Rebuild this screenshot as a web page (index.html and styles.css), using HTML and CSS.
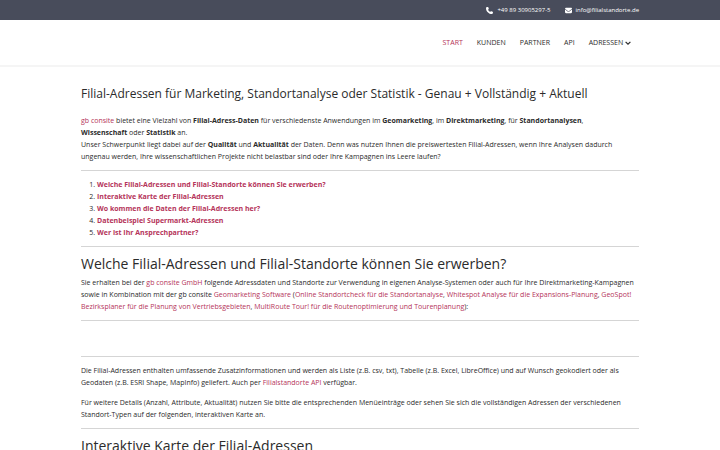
FILE: index.html
```html
<!DOCTYPE html>
<html lang="de">
  <head>
    <meta charset="UTF-8" />
    <meta name="viewport" content="width=device-width, initial-scale=1.0" />
    <title>Filial-Adressen</title>
    <link rel="stylesheet" href="styles.css">
  </head>
  <body>
    <!-- Contact bar -->
    <div class="top-bar">
      <div class="container contact">
        <a href="tel:+4989309052975">
          <svg class="icon" viewBox="0 0 512 512"><path fill="currentColor" d="M164.900 24.600c-7.700-18.600-28-28.500-47.400-23.200l-88 24C12.100 30.200 0 46 0 64c0 247.400 200.600 448 448 448 18 0 33.800-12.100 38.600-29.500l24-88c5.300-19.400-4.600-39.700-23.200-47.400l-96-40c-16.300-6.800-35.200-2.100-46.300 11.600L304.700 368C234.300 334.700 177.300 277.700 144 207.300L193.300 167c13.700-11.200 18.400-30 11.600-46.300l-40-96z"/></svg>
          +49 89 30905297-5
        </a>
        <a href="mailto:info@filialstandorte.de">
          <svg class="icon" viewBox="0 0 512 512"><path fill="currentColor" d="M48 64C21.500 64 0 85.500 0 112c0 15.100 7.100 29.300 19.200 38.400l217.600 163.200c11.400 8.500 27 8.500 38.400 0l217.600-163.200c12.100-9.100 19.200-23.300 19.200-38.400 0-26.500-21.500-48-48-48H48zM0 176v208c0 35.300 28.700 64 64 64h384c35.300 0 64-28.700 64-64V176L294.400 339.200c-22.800 17.100-54 17.100-76.800 0L0 176z"/></svg>
          info@filialstandorte.de
        </a>
      </div>
    </div>

    <!-- Main menu -->
    <header class="header">
      <nav class="container menu">
        <a class="active" href="#">Start</a>
        <a href="#">Kunden</a>
        <a href="#">Partner</a>
        <a href="#">API</a>
        <a href="#">Adressen <svg class="arrow" viewBox="0 0 10 10"><path d="M1 3l4 4 4-4" fill="none" stroke="currentColor" stroke-width="2"/></svg></a>
      </nav>
    </header>

    <main class="container content">
      <h1>Filial-Adressen für Marketing, Standortanalyse oder Statistik - Genau + Vollständig + Aktuell</h1>
      <p>
        <a href="#">gb consite</a> bietet eine Vielzahl von <strong>Filial-Adress-Daten</strong> für verschiedenste Anwendungen im <strong>Geomarketing</strong>, im <strong>Direktmarketing</strong>, für <strong>Standortanalysen</strong>,<br>
        <strong>Wissenschaft</strong> oder <strong>Statistik</strong> an.<br>
        Unser Schwerpunkt liegt dabei auf der <strong>Qualität</strong> und <strong>Aktualität</strong> der Daten. Denn was nutzen Ihnen die preiswertesten Filial-Adressen, wenn Ihre Analysen dadurch ungenau werden, Ihre wissenschaftlichen Projekte nicht belastbar sind oder Ihre Kampagnen ins Leere laufen?
      </p>
      <hr>
      <ol>
        <li><a href="#erwerben">Welche Filial-Adressen und Filial-Standorte können Sie erwerben?</a></li>
        <li><a href="#karte">Interaktive Karte der Filial-Adressen</a></li>
        <li><a href="#">Wo kommen die Daten der Filial-Adressen her?</a></li>
        <li><a href="#">Datenbeispiel Supermarkt-Adressen</a></li>
        <li><a href="#">Wer ist Ihr Ansprechpartner?</a></li>
      </ol>
      <hr>
      <h2 id="erwerben">Welche Filial-Adressen und Filial-Standorte können Sie erwerben?</h2>
      <p>
        Sie erhalten bei der <a href="#">gb consite GmbH</a> folgende Adressdaten und Standorte zur Verwendung in eigenen Analyse-Systemen oder auch für Ihre Direktmarketing-Kampagnen sowie in Kombination mit der gb consite <a href="#">Geomarketing Software</a> (<a href="#">Online Standortcheck für die Standortanalyse</a>, <a href="#">Whitespot Analyse für die Expansions-Planung</a>, <a href="#">GeoSpot! Bezirksplaner für die Planung von Vertriebsgebieten</a>, <a href="#">MultiRoute Tour! für die Routenoptimierung und Tourenplanung</a>):
      </p>
      <hr>
      <div class="teaser"></div>
      <hr>
      <p>Die Filial-Adressen enthalten umfassende Zusatzinformationen und werden als Liste (z.B. csv, txt), Tabelle (z.B. Excel, LibreOffice) und auf Wunsch geokodiert oder als Geodaten (z.B. ESRI Shape, MapInfo) geliefert. Auch per <a href="#">Filialstandorte API</a> verfügbar.</p>
      <p>Für weitere Details (Anzahl, Attribute, Aktualität) nutzen Sie bitte die entsprechenden Menüeinträge oder sehen Sie sich die vollständigen Adressen der verschiedenen Standort-Typen auf der folgenden, interaktiven Karte an.</p>
      <hr>
      <h2 id="karte">Interaktive Karte der Filial-Adressen</h2>
    </main>
  </body>
</html>
```
FILE: styles.css
```css
body {
  margin: 0;
  font-family: "Open Sans", "Noto Sans", sans-serif;
  font-size: 7px;
  line-height: 12px;
  color: #2b2b2b;
  background-color: #fff;
}

a {
  color: #b5345a;
  text-decoration: none;
}

.container {
  max-width: 558px;
  margin: 0 auto;
}

.top-bar {
  background-color: #484c5b;
  padding: 4px 0;
}

.contact {
  display: flex;
  justify-content: flex-end;
  gap: 14px;
  font-size: 6px;
}

.contact a {
  display: flex;
  align-items: center;
  gap: 4px;
  color: #fff;
}

.icon {
  width: 7px;
  height: 7px;
}

.header {
  padding: 17px 0 16px;
  border-bottom: 2px solid #f5f5f5;
}

.menu {
  display: flex;
  justify-content: flex-end;
  gap: 14px;
  padding-right: 8px;
  box-sizing: border-box;
  font-size: 7px;
  text-transform: uppercase;
}

.menu a {
  color: #2b2b2b;
}

.menu .active {
  color: #b5345a;
}

.arrow {
  width: 6px;
  height: 6px;
  vertical-align: middle;
}

.content {
  padding-top: 19px;
}

h1,
h2 {
  font-weight: 400;
  margin: 0;
}

h1 {
  font-size: 12px;
  line-height: 16px;
  margin-bottom: 13px;
}

h2 {
  font-size: 14px;
  line-height: 17px;
  margin-bottom: 5px;
}

p {
  margin: 0;
}

p + p {
  margin-top: 8px;
}

hr {
  border: 0;
  border-top: 1px solid #d5d5d5;
  margin: 7px 0 8px;
}

ol {
  margin: 0;
  padding-left: 16px;
}

ol a {
  font-weight: 700;
}

.teaser {
  height: 20px;
}
```
